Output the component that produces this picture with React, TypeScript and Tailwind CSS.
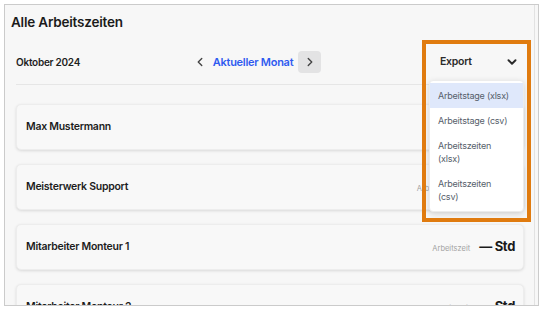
const employees = [
  { name: "Max Mustermann", value: "— Std" },
  { name: "Meisterwerk Support", value: "42,5 Std" },
  { name: "Mitarbeiter Monteur 1", value: "— Std" },
  { name: "Mitarbeiter Monteur 2", value: "— Std" },
];

const exportOptions = [
  "Arbeitstage (xlsx)",
  "Arbeitstage (csv)",
  "Arbeitszeiten (xlsx)",
  "Arbeitszeiten (csv)",
];

const Chevron = ({ dir }: { dir: "left" | "right" | "down" }) => {
  const points =
    dir === "left" ? "10,4 6,8 10,12" : dir === "right" ? "6,4 10,8 6,12" : "4,6 8,10 12,6";
  return (
    <svg width="14" height="14" viewBox="0 0 16 16" fill="none">
      <polyline
        points={points}
        stroke="currentColor"
        strokeWidth={dir === "down" ? 2.2 : 1.6}
        strokeLinecap="round"
        strokeLinejoin="round"
      />
    </svg>
  );
};

export default function App() {
  return (
    <div
      className="w-[544px] h-[310px] bg-white pt-[4px] pb-[4px] pl-[4px] pr-[5px]"
      style={{ fontFamily: "Inter, 'Noto Sans', sans-serif" }}
    >
      <div className="relative flex h-full overflow-hidden border border-[#cbcbcb] bg-[#f7f7f7]">
        {/* main column */}
        <div className="flex-1 flex flex-col">
          <h1 className="pl-[6px] pt-[9px] text-[13.5px] leading-[17px] font-semibold tracking-[-0.015em] text-[#1b1b1b]">
            Alle Arbeitszeiten
          </h1>

          <div className="pl-[11px] pr-[10px]">
            <div className="mt-[19px] flex h-[24px] items-center justify-between">
              <span className="text-[10px] font-semibold tracking-tight text-[#1e1e1e]">Oktober 2024</span>
              <div className="flex items-center text-[#444]">
                <span className="mr-[2px] flex w-[22px] items-center justify-center">
                  <Chevron dir="left" />
                </span>
                <span className="text-[11px] font-semibold tracking-tight text-[#2f5bf0]">Aktueller Monat</span>
                <span className="ml-[5px] flex h-[22px] w-[23px] items-center justify-center rounded-[4px] bg-[#e3e3e4]">
                  <Chevron dir="right" />
                </span>
              </div>
              <div className="flex w-[94px] items-center justify-between pl-[10px] pr-[5px] text-[#2b2b2b]">
                <span className="text-[10.5px] font-semibold tracking-tight">Export</span>
                <Chevron dir="down" />
              </div>
            </div>

            <div className="mt-[10px] border-b border-[#e6e6e6]" />

            <div className="mt-[19px] flex flex-col gap-[14px]">
              {employees.map((e) => (
                <div
                  key={e.name}
                  className="flex h-[46px] shrink-0 items-center justify-between rounded-[5px] border border-[#ededed] bg-[#f8f8f8] pl-[9px] pr-[8px] shadow-[0_1px_3px_rgba(0,0,0,0.12)]"
                >
                  <span className="text-[10.5px] font-semibold tracking-tight text-[#1d1d1d]">{e.name}</span>
                  <div className="flex items-baseline gap-[9px]">
                    <span className="text-[7.5px] text-[#a3a3a3]">Arbeitszeit</span>
                    <span className="text-[13px] font-bold tracking-tight text-[#1b1b1b]">{e.value}</span>
                  </div>
                </div>
              ))}
            </div>
          </div>
        </div>

        {/* scrollbar track */}
        <div className="w-[4px] shrink-0 border-l border-[#e2e2e2]" />

        {/* export menu */}
        <div className="absolute left-[424px] top-[75px] w-[95px] rounded-[4px] border border-[#ececec] bg-white py-[2px] shadow-[0_2px_6px_rgba(0,0,0,0.15)]">
          {exportOptions.map((opt, i) => (
            <div
              key={opt}
              className={`pl-[8px] pr-[10px] py-[6px] text-[9px] leading-[13px] tracking-tight text-[#565e6a] ${
                i === 0 ? "bg-[#dfe8fb]" : ""
              }`}
            >
              {opt}
            </div>
          ))}
        </div>

        {/* highlight frame */}
        <div className="pointer-events-none absolute left-[417px] top-[35px] h-[182px] w-[109px] border-[4px] border-[#e07b0f]" />
      </div>
    </div>
  );
}
